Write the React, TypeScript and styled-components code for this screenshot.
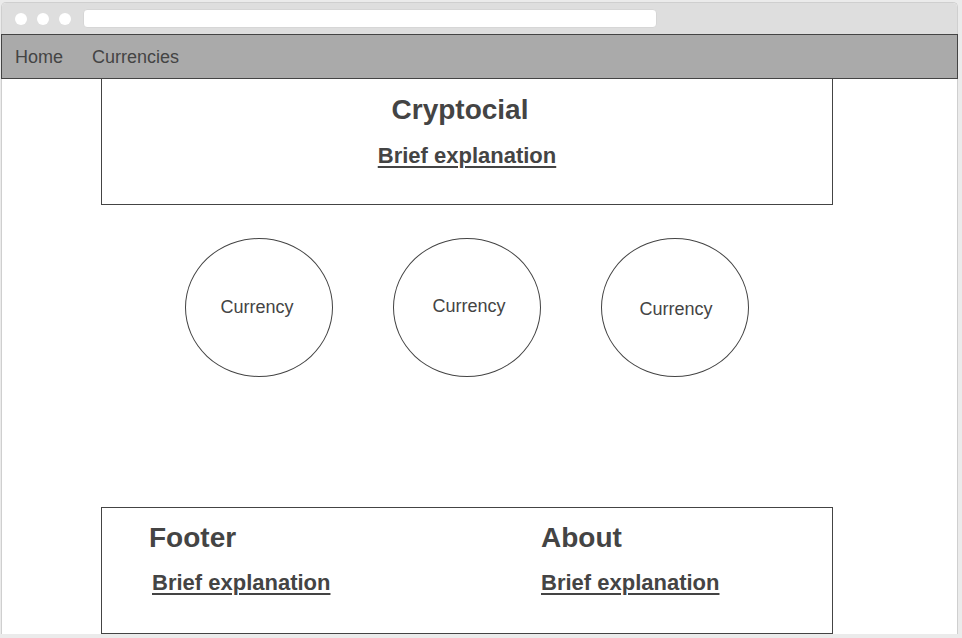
import React from 'react';
import styled, { createGlobalStyle } from 'styled-components';

const GlobalStyle = createGlobalStyle`
  * {
    box-sizing: border-box;
  }
  body {
    margin: 0;
    background: #ebebeb;
    font-family: 'Liberation Sans', Arial, sans-serif;
    color: #444;
  }
`;

// label nudges copied from the mockup, the circles are hand drawn
const currencies = [
  { id: 1, name: 'Currency', dx: -4, dy: -1 },
  { id: 2, name: 'Currency', dx: 4, dy: -3 },
  { id: 3, name: 'Currency', dx: 2, dy: 3 },
];

export default function App() {
  return (
    <>
      <GlobalStyle />
      <Window>
        <TitleBar>
          <Dot />
          <Dot />
          <Dot />
          <UrlBar />
        </TitleBar>
        <NavBar>
          <NavLink>Home</NavLink>
          <NavLink>Currencies</NavLink>
        </NavBar>
        <Content>
          <Header>
            <Title>Cryptocial</Title>
            <Explain href="#">Brief explanation</Explain>
          </Header>
          <CircleRow>
            {currencies.map((c) => (
              <Circle key={c.id}>
                <CircleLabel dx={c.dx} dy={c.dy}>
                  {c.name}
                </CircleLabel>
              </Circle>
            ))}
          </CircleRow>
          <Footer>
            <FooterCol>
              <FooterTitle>Footer</FooterTitle>
              <Explain href="#" indent>
                Brief explanation
              </Explain>
            </FooterCol>
            <FooterCol>
              <FooterTitle>About</FooterTitle>
              <Explain href="#">Brief explanation</Explain>
            </FooterCol>
          </Footer>
        </Content>
      </Window>
    </>
  );
}

const Window = styled.div`
  margin: 2px 0 0 1px;
  width: 957px;
  height: 632px;
  border: 1px solid #cfcfcf;
  border-bottom: none;
  border-radius: 5px 5px 0 0;
  background: #fff;
  display: flex;
  flex-direction: column;
`;

const TitleBar = styled.div`
  height: 31px;
  flex-shrink: 0;
  background: #dedede;
  border-radius: 4px 4px 0 0;
  display: flex;
  align-items: center;
  padding: 0 0 0 13px;
  gap: 10px;
`;

const Dot = styled.span`
  width: 12px;
  height: 12px;
  border-radius: 50%;
  background: #fff;
`;

const UrlBar = styled.div`
  margin-left: 2px;
  width: 574px;
  height: 19px;
  background: #fff;
  border: 1px solid #d6d6d6;
  border-radius: 4px;
`;

const NavBar = styled.nav`
  margin: 0 -1px;
  height: 45px;
  flex-shrink: 0;
  background: #aaaaaa;
  border: 1px solid #444;
  display: flex;
  align-items: flex-start;
  padding: 12px 0 0 13px;
  gap: 29px;
`;

const NavLink = styled.span`
  font-size: 18px;
  line-height: 21px;
  color: #444;
`;

const Content = styled.main`
  flex: 1;
  display: flex;
  flex-direction: column;
  padding-left: 99px;
`;

const Header = styled.section`
  width: 732px;
  height: 126px;
  border: 1px solid #444;
  border-top: none;
  display: flex;
  flex-direction: column;
  align-items: center;
  padding-top: 15px;
  gap: 17px;
`;

const Title = styled.h1`
  margin: 0 14px 0 0;
  font-size: 28px;
  line-height: 32px;
  font-weight: 700;
  color: #444;
`;

const Explain = styled.a<{ indent?: boolean }>`
  display: inline-block;
  margin-left: ${({ indent }) => (indent ? '3px' : '0')};
  font-size: 22px;
  line-height: 26px;
  font-weight: 700;
  color: #444;
  text-decoration: underline;
  text-decoration-thickness: 2px;
  text-underline-offset: 3px;
`;

const CircleRow = styled.div`
  width: 732px;
  margin-top: 33px;
  display: flex;
  justify-content: center;
  gap: 60px;
`;

const Circle = styled.div`
  width: 148px;
  height: 139px;
  border: 1px solid #444;
  border-radius: 50%;
  display: flex;
  align-items: center;
  justify-content: center;
`;

const CircleLabel = styled.span<{ dx: number; dy: number }>`
  font-size: 18px;
  line-height: 21px;
  color: #444;
  margin-left: ${({ dx }) => dx}px;
  margin-top: ${({ dy }) => dy}px;
`;

const Footer = styled.footer`
  margin-top: auto;
  width: 732px;
  height: 127px;
  border: 1px solid #444;
  display: grid;
  grid-template-columns: 392px 1fr;
  padding: 14px 0 0 47px;
`;

const FooterCol = styled.div`
  display: flex;
  flex-direction: column;
  align-items: flex-start;
  gap: 16px;
`;

const FooterTitle = styled.h2`
  margin: 0;
  font-size: 28px;
  line-height: 32px;
  font-weight: 700;
  color: #444;
`;
